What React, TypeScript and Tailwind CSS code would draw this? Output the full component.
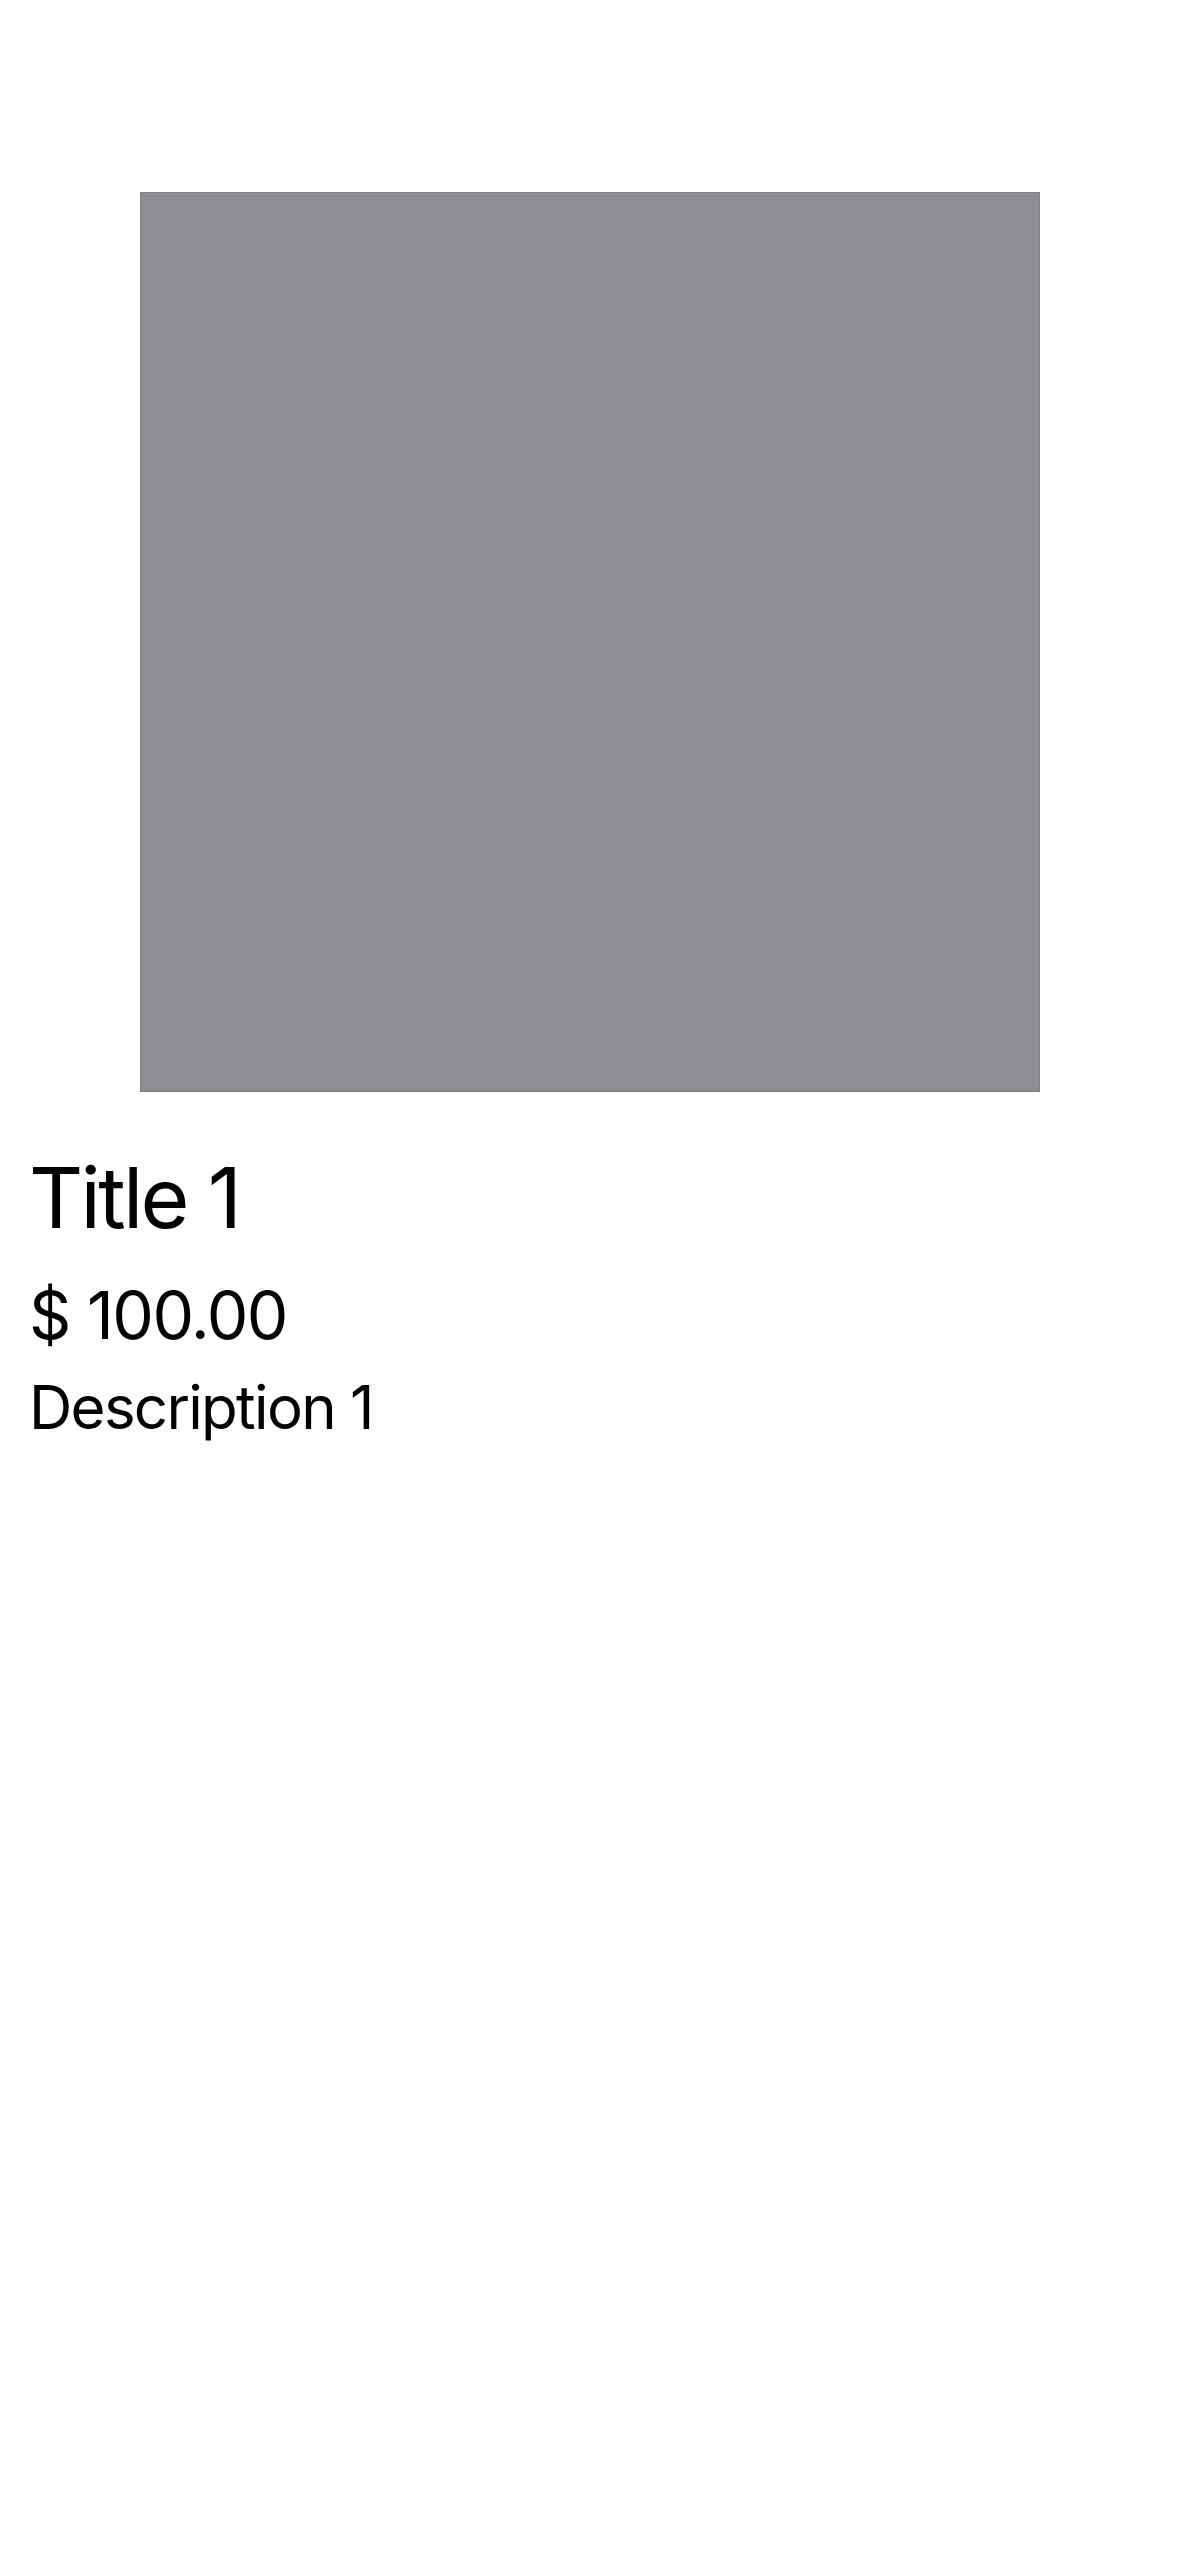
export default function App() {
  return (
    <div className="min-h-[2556px] w-[1179px] bg-white text-black" style={{ fontFamily: 'Inter, "Noto Sans", sans-serif' }}>
      <div className="flex justify-center pt-[192px]">
        <div className="h-[900px] w-[900px] border border-[#7f7f83] bg-[#8e8d92]" />
      </div>
      <div className="flex flex-col px-[29px] pt-[56px]">
        <div className="text-[84px] leading-[100px] tracking-[-2.7px]">Title 1</div>
        <div className="mt-[27px] text-[66px] leading-[80px] tracking-[-1.5px]">$ 100.00</div>
        <div className="mt-[16px] text-[60px] leading-[72px] tracking-[-1.7px]">Description 1</div>
      </div>
    </div>
  );
}
